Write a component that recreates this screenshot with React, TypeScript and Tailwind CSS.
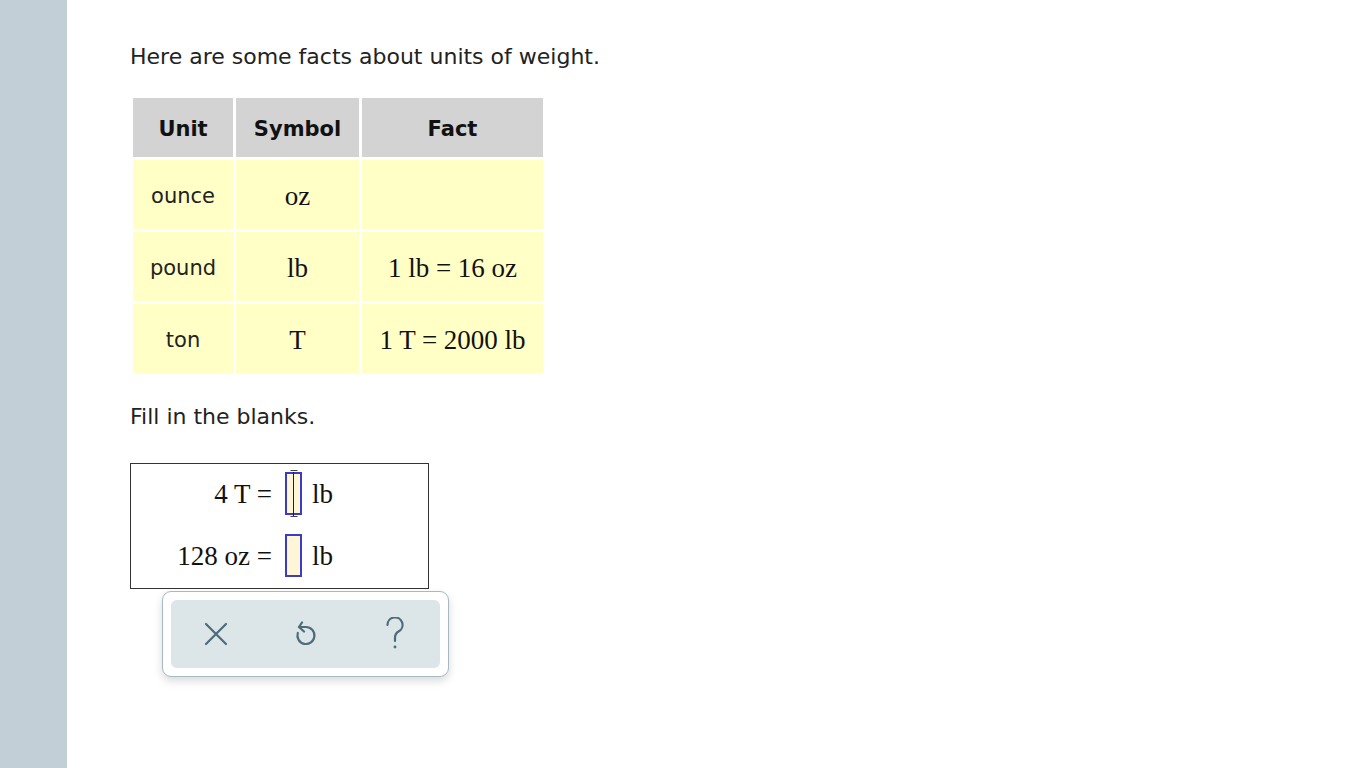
import React from "react";

const sans = "font-['DejaVu_Sans','Verdana',sans-serif]";
const serif = "font-['Liberation_Serif','Times_New_Roman',serif]";

const rows = [
  { unit: "ounce", symbol: "oz", fact: "" },
  { unit: "pound", symbol: "lb", fact: "1 lb = 16 oz" },
  { unit: "ton", symbol: "T", fact: "1 T = 2000 lb" },
];

function Blank({ focused }: { focused?: boolean }) {
  return (
    <div className="relative flex h-[43px] w-[17px] items-center justify-center border-2 border-[#3b3bc4] bg-[#fff6d6]">
      {focused && (
        <>
          <div className="h-[44px] w-px bg-[#222]" />
          <div className="absolute -top-[4px] left-1/2 h-px w-[7px] -translate-x-1/2 bg-[#444]" />
          <div className="absolute -bottom-[4px] left-1/2 h-px w-[7px] -translate-x-1/2 bg-[#444]" />
        </>
      )}
    </div>
  );
}

function Equation({ left, focused }: { left: string; focused?: boolean }) {
  return (
    <div className="flex items-center">
      <div className={`w-[154px] pr-[13px] text-right text-[27px] leading-[30px] text-[#111] ${serif}`}>{left}</div>
      <Blank focused={focused} />
      <div className={`pl-[10px] text-[27px] leading-[30px] text-[#111] ${serif}`}>lb</div>
    </div>
  );
}

export default function App() {
  return (
    <div className="flex min-h-screen bg-white">
      <div className="w-[67px] shrink-0 bg-[#c3cfd6]" />
      <div className={`pl-[63px] pt-[43px] text-[#222] ${sans}`}>
        <p className="text-[22px] leading-[28px]">Here are some facts about units of weight.</p>

        <table className="mt-[24px] border-separate border-spacing-[3px] text-center">
          <thead>
            <tr className="h-[59px] bg-[#d3d3d3] text-[21px] font-bold text-[#111]">
              <th className="w-[100px] pt-[5px]">Unit</th>
              <th className="w-[123px] pt-[5px]">Symbol</th>
              <th className="w-[181px] pt-[5px]">Fact</th>
            </tr>
          </thead>
          <tbody>
            {rows.map((r) => (
              <tr key={r.unit} className="h-[69px] bg-[#ffffc6]">
                <td className="pt-[5px] text-[21px] text-[#222]">{r.unit}</td>
                <td className={`pt-[3px] text-[27px] text-[#111] ${serif}`}>{r.symbol}</td>
                <td className={`pt-[3px] text-[27px] text-[#111] ${serif}`}>{r.fact}</td>
              </tr>
            ))}
          </tbody>
        </table>

        <p className="mt-[27px] text-[22px] leading-[28px]">Fill in the blanks.</p>

        <div className="mt-[32px] flex h-[126px] w-[299px] flex-col gap-[19px] border border-[#333] pt-[8px]">
          <Equation left="4 T =" focused />
          <Equation left="128 oz =" />
        </div>

        <div className="ml-[32px] mt-[2px] w-[287px] rounded-[9px] border border-[#a7b9c3] bg-white p-[8px] shadow-[0_4px_8px_rgba(0,0,0,0.15)]">
          <div className="flex h-[68px] rounded-[6px] bg-[#dce5e8] text-[#4d6b79]">
            <button className="flex w-[90px] items-center justify-center">
              <svg width="24" height="24" viewBox="0 0 24 24" fill="none" stroke="currentColor" strokeWidth="2.2" strokeLinecap="round">
                <path d="M2 2 L22 22 M22 2 L2 22" />
              </svg>
            </button>
            <button className="flex w-[90px] items-center justify-center">
              <svg width="24" height="26" viewBox="0 0 24 26" fill="none" stroke="currentColor" strokeWidth="2.2" strokeLinecap="round" strokeLinejoin="round">
                <path d="M8 1.5 L5 6 L10 10.5" />
                <path d="M5 6 H12 A8.5 8.5 0 1 1 3.8 12" />
              </svg>
            </button>
            <button className="flex w-[90px] items-center justify-center">
              <svg width="20" height="34" viewBox="0 0 20 34" fill="none" stroke="currentColor" strokeWidth="2.2" strokeLinecap="round">
                <path d="M2.5 8 A7.5 7.5 0 1 1 13.5 14.5 C11 16 10 18 10 21 V24" />
                <circle cx="10" cy="30" r="1.4" fill="currentColor" stroke="none" />
              </svg>
            </button>
          </div>
        </div>
      </div>
    </div>
  );
}
